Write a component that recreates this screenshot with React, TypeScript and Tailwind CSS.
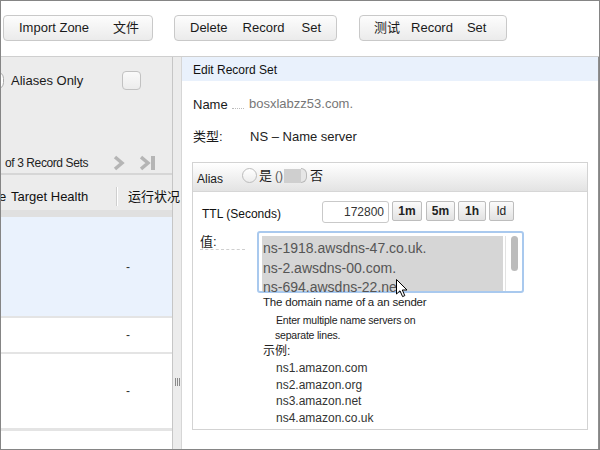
import React from "react";

const ToolButton = ({
  children,
  className,
}: {
  children: React.ReactNode;
  className: string;
}) => (
  <div
    className={`flex h-[26px] items-center rounded-[4px] border border-[#c9c9c9] bg-linear-to-b from-[#fdfdfd] to-[#ebebeb] text-[13px] text-[#1a1a1a] ${className}`}
  >
    {children}
  </div>
);

const TtlButton = ({ label, className }: { label: string; className: string }) => (
  <div
    className={`flex h-[20px] items-center justify-center rounded-[2px] border border-[#bdbdbd] bg-linear-to-b from-[#fbfbfb] to-[#e2e2e2] text-[12px] text-[#222] ${className}`}
  >
    {label}
  </div>
);

const rows = [
  { h: "h-[99px]", bg: "bg-[#eaf2fd]", line: "h-[2px]" },
  { h: "h-[34px]", bg: "bg-white", line: "h-[2px]" },
  { h: "h-[74px]", bg: "bg-white", line: "h-[3px]" },
];

const examples = ["ns1.amazon.com", "ns2.amazon.org", "ns3.amazon.net", "ns4.amazon.co.uk"];
const values = ["ns-1918.awsdns-47.co.uk.", "ns-2.awsdns-00.com.", "ns-694.awsdns-22.net"];

export default function App() {
  return (
    <div className="flex h-[450px] w-[600px] flex-col overflow-hidden border border-[#858585] bg-white font-['Liberation_Sans','Noto_Sans_CJK_SC',sans-serif] text-[#1a1a1a]">
      {/* toolbar */}
      <div className="flex h-[56px] shrink-0 items-start border-b border-[#cfcfcf] pl-[2px] pt-[14px]">
        <ToolButton className="w-[150px] pl-[15px]">
          <span>Import Zone</span>
          <span className="ml-[24px]">文件</span>
        </ToolButton>
        <ToolButton className="ml-[21px] w-[163px] pl-[15px]">
          <span>Delete</span>
          <span className="ml-[15px]">Record</span>
          <span className="ml-[17px]">Set</span>
        </ToolButton>
        <ToolButton className="ml-[22px] w-[148px] pl-[14px]">
          <span>测试</span>
          <span className="ml-[11px]">Record</span>
          <span className="ml-[14px]">Set</span>
        </ToolButton>
      </div>

      <div className="flex min-h-0 flex-1">
        {/* left list pane */}
        <div className="flex w-[172px] shrink-0 flex-col border-r border-[#c6c6c6] bg-white">
          <div className="h-[118px] shrink-0 border-b-2 border-[#d6d6d6] bg-[#ececec]">
            <div className="mt-[14px] flex h-[19px] items-center">
              <div className="-ml-[12px] h-[19px] w-[15px] shrink-0 rounded-full border border-[#a9a9a9] bg-white" />
              <span className="ml-[7px] text-[13px]">Aliases Only</span>
              <div className="ml-auto mr-[31px] h-[19px] w-[19px] shrink-0 rounded-[4px] border border-[#c2c2c2] bg-linear-to-b from-[#fafafa] to-[#ececec]" />
            </div>
            <div className="mt-[65px] flex h-[16px] items-center pl-[4px]">
              <span className="w-[108px] shrink-0 whitespace-nowrap text-[12px] tracking-[-0.4px] text-[#222]">
                of 3 Record Sets
              </span>
              <svg className="shrink-0" width="12" height="16" viewBox="0 0 12 16">
                <path d="M2 2 L9 8 L2 14" fill="none" stroke="#b5b5b5" strokeWidth="3.5" />
              </svg>
              <svg className="ml-[15px] shrink-0" width="16" height="16" viewBox="0 0 16 16">
                <path d="M1 2 L8 8 L1 14" fill="none" stroke="#b5b5b5" strokeWidth="3.5" />
                <rect x="11" y="1" width="4" height="14" fill="#b5b5b5" />
              </svg>
            </div>
          </div>
          <div className="flex h-[35px] shrink-0 items-start bg-[#ececec] pt-[14px] text-[13px] leading-[16px] text-[#111]">
            <span className="-ml-[2px] w-[12px] shrink-0">e</span>
            <span className="w-[105px] shrink-0 whitespace-nowrap">Target Health</span>
            <span className="-mt-[2px] h-[19px] w-[2px] shrink-0 border-l border-[#cfcfcf] bg-white" />
            <span className="relative z-10 ml-[10px] shrink-0 whitespace-nowrap">运行状况</span>
          </div>
          <div className="h-[7px] shrink-0 bg-[#e0e0e0]" />
          {rows.map((r, i) => (
            <React.Fragment key={i}>
              <div className={`flex shrink-0 items-center pl-[125px] text-[12px] text-[#333] ${r.h} ${r.bg}`}>-</div>
              <div className={`shrink-0 bg-[#e4e4e4] ${r.line}`} />
            </React.Fragment>
          ))}
          <div className="flex-1 bg-white" />
        </div>

        {/* splitter */}
        <div className="flex w-[8px] shrink-0 flex-col items-center bg-[#ececec]">
          <div className="mt-[321px] flex h-[8px] gap-[1px]">
            <div className="w-[1px] bg-[#8a8a8a]" />
            <div className="w-[1px] bg-[#8a8a8a]" />
            <div className="w-[1px] bg-[#8a8a8a]" />
          </div>
        </div>

        {/* edit pane */}
        <div className="flex flex-1 flex-col border-l border-r border-[#d6d6d6] border-r-[#8f8f8f] bg-white">
          <div className="flex h-[24px] shrink-0 items-center bg-[#e9f1fc] pl-[11px] pt-[2px] text-[12px] text-[#111]">
            Edit Record Set
          </div>

          <div className="mt-[15px] flex h-[18px] items-center pl-[11px] text-[13px]">
            <span className="w-[56px]">
              Name
              <span className="ml-[4px] inline-block w-[12px] border-b border-dotted border-[#bbb]" />
            </span>
            <span className="-mt-[3px] text-[#777]">bosxlabzz53.com.</span>
          </div>
          <div className="mt-[14px] flex h-[18px] items-center pl-[11px] text-[13px]">
            <span className="w-[57px]">类型:</span>
            <span className="text-[#222]">NS – Name server</span>
          </div>

          <div className="mx-[10px] mb-[19px] mt-[16px] flex flex-1 flex-col border border-[#d3d3d3]">
            <div className="flex h-[29px] shrink-0 items-center border-b border-[#d6d6d6] bg-linear-to-b from-white to-[#e3e3e3] pl-[4px] text-[12px]">
              <span className="mt-[3px] w-[45px]">Alias</span>
              <div className="-mt-[3px] h-[15px] w-[15px] rounded-full border border-[#bcbcbc] bg-linear-to-b from-white to-[#ededed]" />
              <span className="-mt-[3px] ml-[2px] text-[13px]">是</span>
              <span className="-mt-[3px] ml-[3px] text-[12px] text-[#555]">()</span>
              <div className="-mt-[3px] ml-[1px] h-[14px] w-[17px] bg-[#cfcfcf]" />
              <div className="-mt-[3px] h-[15px] w-[6px] rounded-r-full border border-l-0 border-[#b9b9b9] bg-[#e6e6e6]" />
              <span className="-mt-[3px] ml-[3px] text-[13px]">否</span>
            </div>

            <div className="mt-[9px] flex h-[22px] shrink-0 items-center">
              <span className="w-[129px] pl-[9px] pt-[3px] text-[12px] text-[#111]">TTL (Seconds)</span>
              <div className="flex h-[22px] w-[67px] items-center justify-end rounded-[3px] border border-[#c9c9c9] pr-[4px] text-[12px] text-[#333]">
                172800
              </div>
              <TtlButton label="1m" className="mb-[2px] ml-[3px] w-[30px] font-bold" />
              <TtlButton label="5m" className="mb-[2px] ml-[4px] w-[29px] font-bold" />
              <TtlButton label="1h" className="mb-[2px] ml-[3px] w-[28px] font-bold" />
              <TtlButton label="ld" className="mb-[2px] ml-[3px] w-[25px]" />
            </div>

            <div className="mt-[8px] flex">
              <div className="w-[64px] shrink-0 pl-[7px] pt-[3px]">
                <span className="block w-[45px] border-b border-dashed border-[#cfcfcf] text-[13px] leading-[15px]">值:</span>
              </div>
              <div className="flex flex-col">
                <div className="relative flex h-[62px] w-[267px] rounded-[3px] border-2 border-[#a9c9ee] bg-white pl-[3px] pt-[3px]">
                  <div className="w-[241px] bg-[#d6d6d6] pl-[1px] pt-[3px] text-[14px] leading-[19.5px] text-[#555]">
                    {values.map((v) => (
                      <div key={v} className="whitespace-nowrap">
                        {v}
                      </div>
                    ))}
                  </div>
                  <div className="ml-[2px] flex w-[17px] justify-center border-l border-[#e2e2e2]">
                    <div className="ml-[1px] h-[35px] w-[7px] rounded-full bg-[#bcbcbc]" />
                  </div>
                  <svg className="absolute left-[137px] top-[46px]" width="13" height="19" viewBox="0 0 13 19">
                    <path
                      d="M0.5 0.5 L0.5 15 L4 11.8 L6.6 17.6 L8.8 16.6 L6.3 11 L11 11 Z"
                      fill="#fff"
                      stroke="#000"
                      strokeWidth="1"
                      strokeLinejoin="round"
                    />
                  </svg>
                </div>
                <div className="mt-[1px] pl-[6px] text-[#222]">
                  <div className="h-[16px] text-[11.5px] leading-[16px] tracking-[-0.2px]">The domain name of a an sender</div>
                  <div className="mt-[2px] h-[16px] pl-[13px] text-[10.5px] leading-[16px] tracking-[-0.2px]">
                    Enter multiple name servers on
                  </div>
                  <div className="h-[14px] pl-[12px] text-[10.5px] leading-[14px] tracking-[-0.2px]">separate lines.</div>
                  <div className="mt-[2px] h-[14px] text-[12px] leading-[14px]">示例:</div>
                  <div className="mt-[2px] pl-[13px] text-[12px] leading-[16.5px] text-[#333]">
                    {examples.map((e) => (
                      <div key={e}>{e}</div>
                    ))}
                  </div>
                </div>
              </div>
            </div>
          </div>
        </div>
      </div>
    </div>
  );
}
